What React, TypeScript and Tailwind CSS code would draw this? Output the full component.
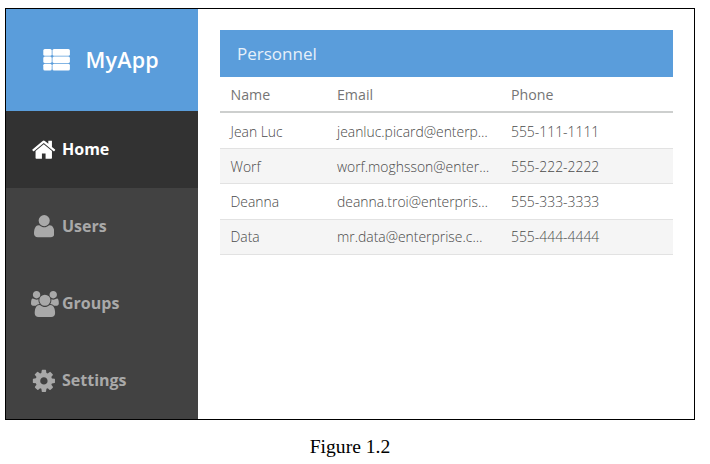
import React from "react";

const userPath =
  "M1408 131q0 -120 -73 -189.5t-194 -69.5h-874q-121 0 -194 69.5t-73 189.5q0 53 3.5 103.5t14 109t26.5 108.5t43 97.5t62 81t85.5 53.5t111.5 20q9 0 42 -21.5t74.5 -48t108 -48t133.5 -21.5t133.5 21.5t108 48t74.5 48t42 21.5q61 0 111.5 -20t85.5 -53.5t62 -81t43 -97.5t26.5 -108.5t14 -109t3.5 -103.5zM1088 1024q0 -159 -112.5 -271.5t-271.5 -112.5t-271.5 112.5t-112.5 271.5t112.5 271.5t271.5 112.5t271.5 -112.5t112.5 -271.5z";
const homePath =
  "M1472 992v480q0 26-19 45t-45 19h-384v-384h-256v384h-384q-26 0-45-19t-19-45v-480q0-1 .5-3t.5-3l575-474 575 474q1 2 1 6zm223-69l-62 74q-8 9-21 11h-3q-13 0-21-7l-692-577-692 577q-12 8-24 7-13-2-21-11l-62-74q-8-10-7-23.5t11-21.5l719-599q32-26 76-26t76 26l244 204v-195q0-14 9-23t23-9h192q14 0 23 9t9 23v408l219 182q10 8 11 21.5t-7 23.5z";
const cogPath =
  "M1152 896q0-106-75-181t-181-75-181 75-75 181 75 181 181 75 181-75 75-181zm512-109v222q0 12-8 23t-20 13l-185 28q-19 54-39 91 35 50 107 138 10 12 10 25t-9 23q-27 37-99 108t-94 71q-12 0-26-9l-138-108q-44 23-91 38-16 136-29 186-7 28-36 28h-222q-14 0-24.5-8.5t-11.5-21.5l-28-184q-49-16-90-37l-141 107q-10 9-25 9-14 0-25-11-126-114-165-168-7-10-7-23 0-12 8-23 15-21 51-66.5t54-70.5q-27-50-41-99l-183-27q-13-2-21-12.5t-8-23.5v-222q0-12 8-23t19-13l186-28q14-46 39-92-40-57-107-138-10-12-10-24 0-10 9-23 26-36 98.5-107.5t94.5-71.5q13 0 26 10l138 107q44-23 91-38 16-136 29-186 7-28 36-28h222q14 0 24.5 8.5t11.5 21.5l28 184q49 16 90 37l142-107q9-9 24-9 13 0 25 10 129 119 165 170 7 8 7 22 0 12-8 23-15 21-51 66.5t-54 70.5q26 50 41 98l183 28q13 2 21 12.5t8 23.5z";
const groupPath =
  "M593 896q-162 5-265 128h-134q-82 0-138-40.5t-56-118.5q0-353 124-353 6 0 43.5 21t97.5 42.5 119 21.5q67 0 133-23-5 37-5 66 0 143 83 259zm1071 637q0 120-73 189.5t-194 69.5h-874q-121 0-194-69.5t-73-189.5q0-53 3.5-103.5t14-109 26.5-108.5 43-97.5 62-81 85.5-53.5 111.5-20q10 0 43 21.5t73 48 107 48 135 21.5 135-21.5 107-48 73-48 43-21.5q61 0 111.5 20t85.5 53.5 62 81 43 97.5 26.5 108.5 14 109 3.5 103.5zm-1024-1277q0 106-75 181t-181 75-181-75-75-181 75-181 181-75 181 75 75 181zm704 384q0 159-112.5 271.5t-271.5 112.5-271.5-112.5-112.5-271.5 112.5-271.5 271.5-112.5 271.5 112.5 112.5 271.5zm576 225q0 78-56 118.5t-138 40.5h-134q-103-123-265-128 83-116 83-259 0-29-5-66 66 23 133 23 59 0 119-21.5t97.5-42.5 43.5-21q124 0 124 353zm-128-609q0 106-75 181t-181 75-181-75-75-181 75-181 181-75 181 75 75 181z";

const ListIcon = () => (
  <svg className="h-[22px] w-[27px] shrink-0" viewBox="0 0 27 22" fill="currentColor">
    {[0, 7.4, 14.8].map((y) => (
      <g key={y}>
        <rect x="0.3" y={y} width="8.4" height="6.7" rx="1.5" />
        <rect x="9.5" y={y} width="17.4" height="6.7" rx="1.5" />
      </g>
    ))}
  </svg>
);

const menu = [
  {
    label: "Home",
    active: true,
    icon: (
      <svg className="h-[25.5px] w-[25.5px] shrink-0" viewBox="0 0 1792 1792" fill="currentColor">
        <path d={homePath} />
      </svg>
    ),
  },
  {
    label: "Users",
    icon: (
      <svg className="h-[22.3px] w-[20.4px] shrink-0" viewBox="0 0 1408 1536" fill="currentColor">
        <path transform="translate(0 1408) scale(1 -1)" d={userPath} />
      </svg>
    ),
  },
  {
    label: "Groups",
    icon: (
      <svg className="ml-[1.5px] h-[26px] w-[27.8px] shrink-0" viewBox="0 0 1920 1792" fill="currentColor">
        <path d={groupPath} />
      </svg>
    ),
  },
  {
    label: "Settings",
    icon: (
      <svg className="h-[25.8px] w-[25.8px] shrink-0" viewBox="0 0 1792 1792" fill="currentColor">
        <path d={cogPath} />
      </svg>
    ),
  },
];

const people = [
  ["Jean Luc", "jeanluc.picard@enterp…", "555-111-1111"],
  ["Worf", "worf.moghsson@enter…", "555-222-2222"],
  ["Deanna", "deanna.troi@enterpris…", "555-333-3333"],
  ["Data", "mr.data@enterprise.c…", "555-444-4444"],
];

export default function App() {
  return (
    <div className="flex h-[464px] w-[710px] flex-col bg-white pt-2 pl-[5px] font-['Open_Sans',sans-serif]">
      <div className="flex h-[412px] w-[690px] shrink-0 border border-black">
        <aside className="flex w-[192.4px] shrink-0 flex-col bg-[#424242]">
          <div className="flex h-[102px] items-center bg-[#5a9ddb] pl-[37px] text-white">
            <ListIcon />
            <span className="pl-[15.5px] text-[21.5px] leading-none font-semibold tracking-[0.2px]">MyApp</span>
          </div>
          <nav className="flex flex-col">
            {menu.map((m) => (
              <div
                key={m.label}
                className={
                  m.active
                    ? "flex h-[77px] items-center bg-[#323232] text-white"
                    : "flex h-[77px] items-center text-[#a9a9a9]"
                }
              >
                <div className="ml-[24px] flex w-[28px] shrink-0 justify-center">{m.icon}</div>
                <span className="pb-[2px] pl-[4px] text-[16px] leading-none font-bold">{m.label}</span>
              </div>
            ))}
          </nav>
        </aside>
        <main className="pt-[21px] pl-[21.6px]">
          <section className="w-[453.5px] text-[14px] text-[#4a4a4a]">
            <h1 className="flex h-[47px] items-center bg-[#5a9ddb] pl-[17px] text-[17px] font-normal text-[#e6f0fa]">
              Personnel
            </h1>
            <div className="mb-[1px] grid h-[36px] grid-cols-[106.5px_174px_1fr] items-center border-b-2 border-[#cdcfce] pt-[2px] pl-[10.5px] text-[14.2px] text-[#757575]">
              <span>Name</span>
              <span>Email</span>
              <span>Phone</span>
            </div>
            {people.map((p, i) => (
              <div
                key={p[0]}
                className={
                  i % 2
                    ? "grid h-[35.2px] grid-cols-[106.5px_174px_1fr] items-center border-b border-[#e2e2e2] bg-[#f5f5f5] pt-[2px] pl-[10.5px] text-[13.92px] font-light"
                    : "grid h-[35.2px] grid-cols-[106.5px_174px_1fr] items-center border-b border-[#e2e2e2] pt-[2px] pl-[10.5px] text-[13.92px] font-light"
                }
              >
                {p.map((t) => (
                  <span key={t} className="whitespace-nowrap">
                    {t}
                  </span>
                ))}
              </div>
            ))}
          </section>
        </main>
      </div>
      <p className="mt-[13px] w-[690px] text-center font-['Palatino_Linotype','Palatino','Liberation_Serif',serif] text-[19.6px] leading-7 text-black">
        Figure 1.2
      </p>
    </div>
  );
}
